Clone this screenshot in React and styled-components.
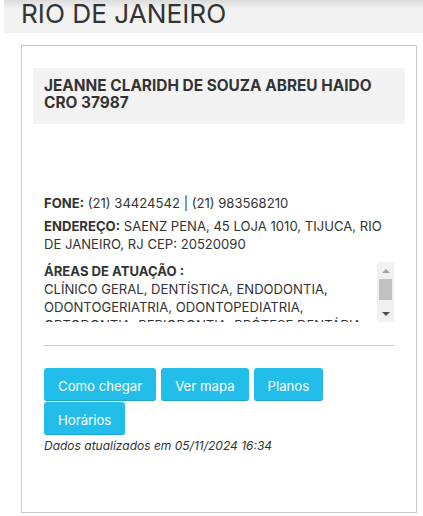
import React from "react";
import styled, { createGlobalStyle } from "styled-components";

const Global = createGlobalStyle`
  html, body { margin: 0; padding: 0; background: #fff; }
  body { font-family: Inter, "Noto Sans", Arial, sans-serif; color: #333; }
  * { box-sizing: border-box; }
`;

const Page = styled.div`
  display: flex;
  flex-direction: column;
`;

const Header = styled.div`
  margin-left: 4px;
  height: 33px;
  padding-left: 17px;
  background: linear-gradient(#dcdcdc 0px, #f2f2f2 9px, #f2f2f2 100%);
`;

const Title = styled.h2`
  margin: 0;
  font-size: 26.2px;
  line-height: 28px;
  font-weight: 400;
  color: #333;
`;

const Card = styled.div`
  margin: 12px 6px 0 21px;
  height: 468px;
  border: 1px solid #c8c8c8;
  padding: 22px 11px 11px;
  display: flex;
  flex-direction: column;
`;

const NameBox = styled.div`
  background: #f3f3f3;
  padding: 9px 11px 13px;
`;

const Name = styled.h4`
  margin: 0;
  font-size: 15.4px;
  line-height: 17px;
  font-weight: 700;
  color: #333;
`;

const Body = styled.div`
  padding: 0 11px;
  display: flex;
  flex-direction: column;
`;

const Info = styled.p`
  margin: ${(p) => p.$mt || 0}px 0 0;
  font-size: 13.1px;
  line-height: 18px;
  color: #333;
`;

const Label = styled.strong`
  font-weight: 700;
`;

const ScrollArea = styled.div`
  margin-top: 9px;
  height: 60px;
  display: flex;
`;

const ScrollContent = styled.div`
  flex: 1;
  min-width: 0;
  overflow: hidden;
  font-size: 13.1px;
  line-height: 18px;
  color: #333;
`;

const Scrollbar = styled.div`
  width: 17px;
  flex: none;
  background: #f1f1f1;
  display: flex;
  flex-direction: column;
`;

const Arrow = styled.div`
  height: 17px;
  flex: none;
  display: flex;
  align-items: center;
  justify-content: center;

  &::before {
    content: "";
    width: 0;
    height: 0;
    border-left: 4px solid transparent;
    border-right: 4px solid transparent;
    ${(p) =>
      p.$dir === "up"
        ? `border-bottom: 4px solid ${p.$color};`
        : `border-top: 4px solid ${p.$color};`}
  }
`;

const Track = styled.div`
  flex: 1;
  padding: 0 2px;
`;

const Thumb = styled.div`
  height: 21px;
  background: #c1c1c1;
`;

const Rule = styled.hr`
  margin: 23px 0 0;
  border: 0;
  border-top: 1px solid #cccccc;
  height: 0;
`;

const Buttons = styled.div`
  margin-top: 22px;
  display: flex;
  flex-wrap: wrap;
  gap: 1px 5px;
`;

const Button = styled.a`
  display: inline-block;
  background: #23bdea;
  color: #fff;
  font-size: 13.2px;
  line-height: 20px;
  padding: 7.5px 14px 4.5px;
  border-radius: 3px;
  border-bottom: 1px solid #1ea6cf;
  text-decoration: none;
  cursor: pointer;
`;

const Updated = styled.p`
  margin: 2px 0 0;
  font-size: 12px;
  line-height: 18px;
  font-style: italic;
  color: #333;
`;

export default function App() {
  const buttons = ["Como chegar", "Ver mapa", "Planos", "Horários"];
  return (
    <Page>
      <Global />
      <Header>
        <Title>RIO DE JANEIRO</Title>
      </Header>
      <Card>
        <NameBox>
          <Name>
            JEANNE CLARIDH DE SOUZA ABREU HAIDO
            <br />
            CRO 37987
          </Name>
        </NameBox>
        <Body>
          <Info $mt={70}>
            <Label>FONE:</Label> (21) 34424542 | (21) 983568210
          </Info>
          <Info $mt={5}>
            <Label>ENDEREÇO:</Label> SAENZ PENA, 45 LOJA 1010, TIJUCA, RIO DE
            JANEIRO, RJ CEP: 20520090
          </Info>
          <ScrollArea>
            <ScrollContent>
              <Label>ÁREAS DE ATUAÇÃO :</Label>
              <br />
              CLÍNICO GERAL, DENTÍSTICA, ENDODONTIA, ODONTOGERIATRIA,
              ODONTOPEDIATRIA, ORTODONTIA, PERIODONTIA, PRÓTESE DENTÁRIA
            </ScrollContent>
            <Scrollbar aria-hidden="true">
              <Arrow $dir="up" $color="#a3a3a3" />
              <Track>
                <Thumb />
              </Track>
              <Arrow $dir="down" $color="#505050" />
            </Scrollbar>
          </ScrollArea>
          <Rule />
          <Buttons>
            {buttons.map((b) => (
              <Button key={b}>{b}</Button>
            ))}
          </Buttons>
          <Updated>Dados atualizados em 05/11/2024 16:34</Updated>
        </Body>
      </Card>
    </Page>
  );
}
